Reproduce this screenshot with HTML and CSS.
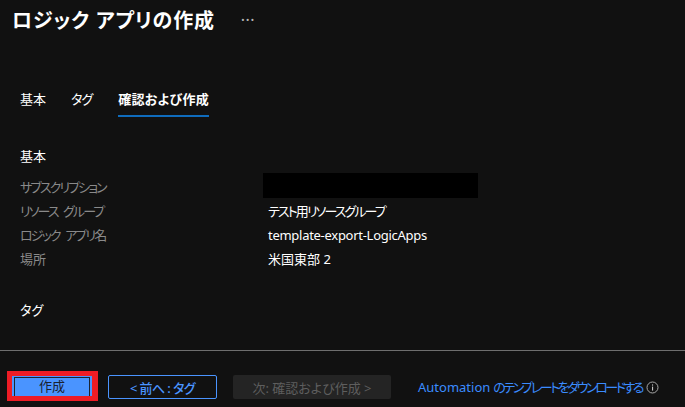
FILE: index.html
```html
<!DOCTYPE html>
<html lang="ja">
<head>
<meta charset="utf-8">
<title>ロジック アプリの作成</title>
<link rel="stylesheet" href="styles.css">
</head>
<body>
<div class="page">
  <header class="head">
    <h1 class="title">ロジック アプリの作成</h1>
    <span class="more">···</span>
  </header>
  <nav class="tabs">
    <span class="tab">基本</span>
    <span class="tab tag">タグ</span>
    <span class="tab active">確認および作成</span>
  </nav>
  <main class="content">
    <h2 class="section">基本</h2>
    <dl class="rows">
      <dt class="kana">サブスクリプション</dt><dd><span class="redact"></span></dd>
      <dt class="kana">リソース グループ</dt><dd class="kana">テスト用リソースグループ</dd>
      <dt class="kana">ロジック アプリ名</dt><dd class="latin">template-export-LogicApps</dd>
      <dt>場所</dt><dd>米国東部 2</dd>
    </dl>
    <h2 class="section tags">タグ</h2>
  </main>
  <footer class="foot">
    <span class="hl"><button class="btn primary"><span class="frame">作成</span></button></span>
    <button class="btn outline">&lt; 前へ : タグ</button>
    <button class="btn disabled">次: 確認および作成 &gt;</button>
    <a class="link">Automation <span class="linkkana">のテンプレートをダウンロードする</span></a>
    <svg class="info" width="13" height="13" viewBox="0 0 13 13"><circle cx="6.5" cy="6.5" r="5.5" fill="none" stroke="#a8a8a8" stroke-width="1"/><rect x="6" y="5.6" width="1.1" height="4" fill="#c8c8c8"/><rect x="6" y="3.4" width="1.1" height="1.2" fill="#c8c8c8"/></svg>
  </footer>
</div>
</body>
</html>
```
FILE: styles.css
```css
* { box-sizing: border-box; }
html, body { margin: 0; padding: 0; }
body {
  background: #111111;
  color: #fff;
  font-family: "Noto Sans", "Noto Sans CJK JP", sans-serif;
  font-size: 13px;
  font-feature-settings: "palt";
}
.page { width: 685px; height: 407px; display: flex; flex-direction: column; overflow: hidden; }
.head { height: 42px; padding: 7px 0 0 12px; display: flex; align-items: flex-start; }
.title { margin: 0; font-size: 20px; line-height: 28px; font-weight: 700; white-space: nowrap; letter-spacing: 0.8px; }
.more { margin: 3px 0 0 26px; color: #b8b8b8; font-size: 16px; line-height: 20px; letter-spacing: 0.4px; }
.tabs { margin-top: 44px; height: 31px; padding-left: 20px; display: flex; }
.tab { height: 31px; line-height: 27px; color: #fff; white-space: nowrap; }
.tab.tag { margin: 0 26px 0 25px; letter-spacing: -1px; }
.tab.active { font-weight: 700; letter-spacing: 0.3px; border-bottom: 2px solid #0f6cbd; }
.content { flex: 1; padding: 30px 0 0 20px; }
.section { margin: 0; font-size: 13px; line-height: 18px; font-weight: 400; }
.rows { margin: 10px 0 0; display: grid; grid-template-columns: 248px 1fr; grid-auto-rows: 24px; line-height: 24px; }
.rows dt { color: #8a8a8a; white-space: nowrap; }
.rows dd { margin: 0; white-space: nowrap; }
.kana { letter-spacing: -1.9px; word-spacing: 4px; }
.latin { letter-spacing: -0.28px; }
.redact { display: block; width: 215px; height: 25px; margin: -2px 0 0 -5px; background: #000; }
.section.tags { margin-top: 30px; }
.foot { height: 57px; border-top: 1px solid #6e6e6e; padding: 20px 0 0 7px; display: flex; align-items: flex-start; }
.hl { display: block; flex: none; width: 91px; height: 30px; padding: 5px 6px 0 5px; background: #ee1c25; }
.btn { font: inherit; font-feature-settings: "palt"; flex: none; height: 24px; padding: 0; border-radius: 2px; white-space: nowrap; }
.primary { width: 80px; height: 20px; display: block; background: #4a94ff; color: #1a2230; border: 0; border-radius: 0; padding: 1px 2px 0; }
.frame { display: block; height: 19px; border: 1px solid #1c2430; border-bottom: 0; line-height: 17px; }
.outline { width: 109px; margin: 4px 0 0 10px; background: transparent; border: 1px solid #4a94ff; color: #4a94ff; font-weight: 500; letter-spacing: -0.6px; }
.disabled { width: 158px; margin: 4px 0 0 16px; background: #242424; border: 0; color: #5e5e5e; }
.link { margin: 4px 0 0 27px; line-height: 24px; color: #3b8cff; white-space: nowrap; flex: none; word-spacing: -0.5px; }
.linkkana { letter-spacing: -2.45px; }
.info { margin: 10px 0 0 4px; flex: none; }
```
